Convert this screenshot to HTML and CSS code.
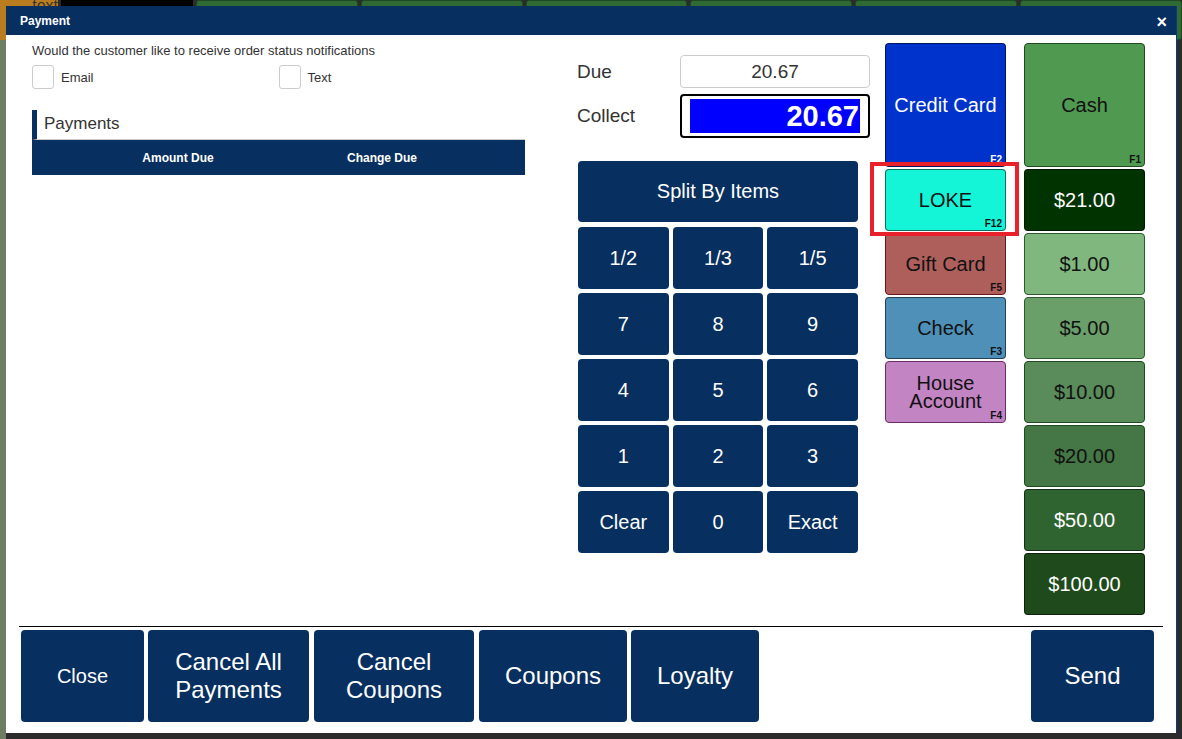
FILE: index.html
```html
<html lang="en">
    <head>
        <title>Payment</title>
        <link rel="stylesheet" href="styles.css">
    </head>
    <body>
        <div class="backdrop">
            <div class="back-top">
                <div class="back-order">text</div>
                <div class="back-black"></div>
                <div class="back-tile"></div>
                <div class="back-tile"></div>
                <div class="back-tile"></div>
                <div class="back-tile"></div>
                <div class="back-tile"></div>
                <div class="back-tile"></div>
            </div>
            <div class="back-left"></div>
        </div>

        <div class="modal">
            <div class="modal-header">
                <span class="modal-title">Payment</span>
                <span class="modal-close">&#215;</span>
            </div>

            <div class="modal-body">
                <div class="left-col">
                    <div class="notify-text">Would the customer like to receive order status notifications</div>
                    <div class="notify-row">
                        <label class="notify-opt"><span class="check-box"></span>Email</label>
                        <label class="notify-opt"><span class="check-box"></span>Text</label>
                    </div>
                    <div class="payments-title">Payments</div>
                    <div class="payments-head">
                        <span></span>
                        <span>Amount Due</span>
                        <span></span>
                        <span>Change Due</span>
                        <span></span>
                    </div>
                </div>

                <div class="mid-col">
                    <div class="amount-row">
                        <span class="amount-label">Due</span>
                        <div class="due-box">20.67</div>
                    </div>
                    <div class="amount-row">
                        <span class="amount-label">Collect</span>
                        <div class="collect-box"><div class="collect-value">20.67</div></div>
                    </div>
                    <div class="keypad">
                        <button class="key key-wide">Split By Items</button>
                        <button class="key">1/2</button>
                        <button class="key">1/3</button>
                        <button class="key">1/5</button>
                        <button class="key">7</button>
                        <button class="key">8</button>
                        <button class="key">9</button>
                        <button class="key">4</button>
                        <button class="key">5</button>
                        <button class="key">6</button>
                        <button class="key">1</button>
                        <button class="key">2</button>
                        <button class="key">3</button>
                        <button class="key">Clear</button>
                        <button class="key">0</button>
                        <button class="key">Exact</button>
                    </div>
                </div>

                <div class="tender-col">
                    <button class="tender tender-tall credit">Credit Card<span class="fkey fkey-light">F2</span></button>
                    <button class="tender loke">LOKE<span class="fkey">F12</span></button>
                    <button class="tender gift">Gift Card<span class="fkey">F5</span></button>
                    <button class="tender check">Check<span class="fkey">F3</span></button>
                    <button class="tender house">House<br>Account<span class="fkey">F4</span></button>
                    <div class="highlight"></div>
                </div>

                <div class="tender-col">
                    <button class="tender tender-tall cash">Cash<span class="fkey">F1</span></button>
                    <button class="tender cash-21">$21.00</button>
                    <button class="tender cash-1">$1.00</button>
                    <button class="tender cash-5">$5.00</button>
                    <button class="tender cash-10">$10.00</button>
                    <button class="tender cash-20">$20.00</button>
                    <button class="tender cash-50">$50.00</button>
                    <button class="tender cash-100">$100.00</button>
                </div>
            </div>

            <div class="modal-divider"></div>

            <div class="modal-footer">
                <button class="foot-btn w-close">Close</button>
                <button class="foot-btn w-cancel-all">Cancel All<br>Payments</button>
                <button class="foot-btn w-cancel-coupons">Cancel<br>Coupons</button>
                <button class="foot-btn w-coupons">Coupons</button>
                <button class="foot-btn w-loyalty">Loyalty</button>
                <span class="foot-spacer"></span>
                <button class="foot-btn w-send">Send</button>
            </div>
        </div>
    </body>
</html>
```

FILE: styles.css
```css
body {
    margin: 0;
    width: 1182px;
    height: 739px;
    overflow: hidden;
    background-color: #2b2b2b;
    font-family: "Liberation Sans", Arial, sans-serif;
    position: relative;
}

/* page behind the modal */
.backdrop {
    display: flex;
    flex-direction: column;
    height: 100%;
}
.back-top {
    display: flex;
    height: 40px;
    gap: 3px;
}
.back-order {
    width: 58px;
    background-color: #b97c1e;
    color: #333;
    font-size: 16px;
    text-align: right;
    line-height: 12px;
}
.back-black {
    width: 132px;
    background-color: #000;
}
.back-tile {
    flex: 1;
    background-color: #2f6a35;
    border: 1px solid #1d4a22;
    border-radius: 3px;
}
.back-left {
    width: 6px;
    flex: 1;
    background-color: #6d7d64;
}

/* modal */
.modal {
    position: absolute;
    left: 6px;
    top: 6px;
    width: 1170px;
    height: 727px;
    background-color: #fff;
    display: flex;
    flex-direction: column;
    box-shadow: 1px 0 0 #0a3a78;
}
.modal-header {
    height: 29px;
    background-color: #072f5f;
    color: #fff;
    display: flex;
    align-items: center;
    justify-content: space-between;
    padding: 0 9px 0 14px;
    flex-shrink: 0;
}
.modal-title {
    font-size: 12px;
    font-weight: bold;
}
.modal-close {
    font-size: 18px;
    font-weight: bold;
    line-height: 1;
    margin-top: 2px;
}

.modal-body {
    height: 583px;
    padding: 8px 0 0 26px;
    display: flex;
    align-items: flex-start;
}

/* left column */
.left-col {
    width: 493px;
    color: #333;
}
.notify-text {
    font-size: 13px;
    line-height: 16px;
}
.notify-row {
    display: flex;
    margin-top: 6px;
}
.notify-opt {
    width: 247px;
    display: flex;
    align-items: center;
    font-size: 13px;
}
.check-box {
    width: 20px;
    height: 22px;
    border: 1px solid #ccc;
    border-radius: 3px;
    margin-right: 7px;
    background-color: #fff;
}
.payments-title {
    margin-top: 21px;
    height: 29px;
    border-left: 5px solid #072f5f;
    border-bottom: 1px solid #ccc;
    padding-left: 7px;
    font-size: 17px;
    line-height: 28px;
}
.payments-head {
    height: 35px;
    background-color: #072f5f;
    color: #fff;
    font-size: 12px;
    font-weight: bold;
    display: grid;
    grid-template-columns: 80px 132px 72px 132px 1fr;
    align-items: center;
    text-align: center;
}

/* middle column */
.mid-col {
    width: 293px;
    margin-left: 52px;
    padding-top: 12px;
}
.amount-row {
    display: flex;
    align-items: center;
    justify-content: space-between;
    margin-bottom: 6px;
}
.amount-label {
    font-size: 19px;
    color: #333;
}
.due-box {
    width: 188px;
    height: 31px;
    border: 1px solid #ccc;
    border-radius: 4px;
    text-align: center;
    font-size: 19px;
    line-height: 31px;
    color: #333;
}
.collect-box {
    width: 170px;
    height: 34px;
    border: 2px solid #000;
    border-radius: 4px;
    padding: 3px 8px;
}
.collect-value {
    height: 34px;
    background-color: #0000ff;
    color: #fff;
    font-size: 29px;
    font-weight: bold;
    text-align: right;
    line-height: 35px;
    padding-right: 1px;
}
.keypad {
    margin-top: 23px;
    margin-left: 1px;
    width: 280px;
    display: grid;
    grid-template-columns: repeat(3, 1fr);
    grid-auto-rows: 62px;
    gap: 4px;
}
.key {
    background-color: #072f5f;
    color: #fff;
    border: none;
    border-radius: 4px;
    font-family: "Liberation Sans", Arial, sans-serif;
    font-size: 20px;
    padding: 0;
}
.key-wide {
    grid-column: span 3;
    height: 61px;
    margin-bottom: -1px;
}

/* tender columns */
.tender-col {
    width: 121px;
    margin-left: 15px;
    display: flex;
    flex-direction: column;
    gap: 2px;
    position: relative;
}
.tender-col + .tender-col {
    margin-left: 18px;
}
.tender {
    height: 62px;
    border: 1px solid rgba(0, 0, 0, 0.55);
    border-radius: 4px;
    font-family: "Liberation Sans", Arial, sans-serif;
    font-size: 20px;
    line-height: 18px;
    color: #111;
    position: relative;
    padding: 0;
}
.tender-tall {
    height: 124px;
}
.fkey {
    position: absolute;
    right: 3px;
    bottom: 1px;
    font-size: 10px;
    font-weight: bold;
    line-height: 11px;
    color: #111;
}
.fkey-light {
    color: #fff;
}
.credit { background-color: #0033cc; color: #fff; }
.loke { background-color: #14f5d8; }
.gift { background-color: #ae5f5c; border-color: #6b1616; }
.check { background-color: #4e90b8; }
.house { background-color: #c384c4; border-color: #6a2d6a; }

.cash { background-color: #509950; border-color: #1e4a1e; }
.cash-21 { background-color: #003300; color: #fff; }
.cash-1 { background-color: #80b77f; border-color: #2b5a2b; }
.cash-5 { background-color: #6a9f6a; border-color: #2b5a2b; }
.cash-10 { background-color: #5a8b5a; border-color: #1e4a1e; }
.cash-20 { background-color: #457645; border-color: #1e4a1e; }
.cash-50 { background-color: #2f6430; color: #fff; }
.cash-100 { background-color: #1e4a1c; color: #fff; }

.highlight {
    position: absolute;
    left: -15px;
    top: 119px;
    width: 141px;
    height: 66px;
    border: 4px solid #e8212a;
}

/* footer */
.modal-divider {
    height: 1px;
    background-color: #000;
    margin: 0 13px;
}
.modal-footer {
    display: flex;
    gap: 4px;
    padding: 3px 22px 0 15px;
    height: 92px;
}
.foot-btn {
    height: 92px;
    background-color: #072f5f;
    color: #fff;
    border: none;
    border-radius: 4px;
    font-family: "Liberation Sans", Arial, sans-serif;
    font-size: 24px;
    line-height: 28px;
    padding: 0;
}
.w-close { width: 123px; font-size: 20px; }
.w-cancel-all { width: 161px; }
.w-cancel-coupons { width: 160px; margin-left: 1px; }
.w-coupons { width: 148px; margin-left: 1px; }
.w-loyalty { width: 128px; }
.w-send { width: 123px; }
.foot-spacer { flex: 1; }
```
